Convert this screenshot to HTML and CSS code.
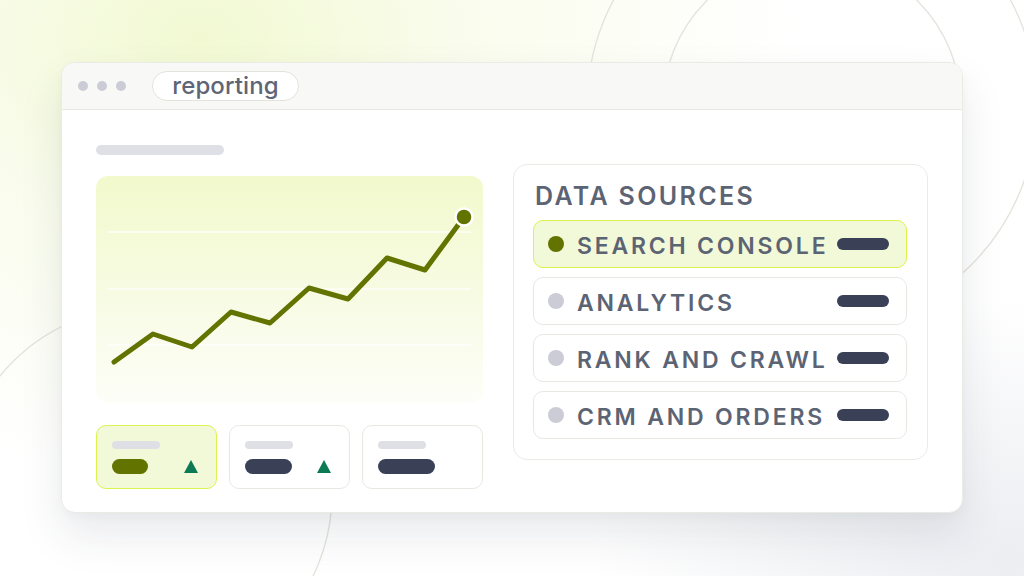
FILE: index.html
```html
<!DOCTYPE html>
<html lang="en">
<head>
<meta charset="utf-8">
<title>reporting</title>
<link rel="stylesheet" href="styles.css">
</head>
<body>
<div class="stage">
  <svg class="bg-lines" width="1024" height="576" viewBox="0 0 1024 576" aria-hidden="true">
    <circle cx="812" cy="106" r="225" />
    <circle cx="812" cy="106" r="149" />
    <circle cx="145" cy="494" r="187" />
  </svg>
  <div class="window">
    <div class="titlebar">
      <div class="dots"><span class="dot"></span><span class="dot"></span><span class="dot"></span></div>
      <div class="tab">reporting</div>
    </div>
    <div class="content">
      <div class="left">
        <div class="heading-bar"></div>
        <div class="chart">
          <svg width="386" height="227" viewBox="0 0 386 227">
            <line class="grid" x1="11" y1="56" x2="374" y2="56" />
            <line class="grid" x1="11" y1="113" x2="374" y2="113" />
            <line class="grid" x1="11" y1="169" x2="374" y2="169" />
            <polyline class="trend" points="17,186 56,158 95,171 134,136 173,147 212,112 251,123 290,82 328,94 367,41" />
            <circle class="end" cx="367" cy="41" r="8.5" />
          </svg>
        </div>
        <div class="cards">
          <div class="card active">
            <div class="card-label"></div>
            <div class="card-row"><span class="card-value v1"></span><span class="up"></span></div>
          </div>
          <div class="card">
            <div class="card-label"></div>
            <div class="card-row"><span class="card-value v2"></span><span class="up"></span></div>
          </div>
          <div class="card">
            <div class="card-label"></div>
            <div class="card-row"><span class="card-value v3"></span></div>
          </div>
        </div>
      </div>
      <div class="panel">
        <div class="panel-title">DATA SOURCES</div>
        <div class="rows">
          <div class="row active"><span class="status"></span><span class="row-name">SEARCH CONSOLE</span><span class="row-pill"></span></div>
          <div class="row"><span class="status"></span><span class="row-name">ANALYTICS</span><span class="row-pill"></span></div>
          <div class="row"><span class="status"></span><span class="row-name">RANK AND CRAWL</span><span class="row-pill"></span></div>
          <div class="row"><span class="status"></span><span class="row-name">CRM AND ORDERS</span><span class="row-pill"></span></div>
        </div>
      </div>
    </div>
  </div>
</div>
</body>
</html>
```

FILE: styles.css
```css
* { box-sizing: border-box; }
html, body { margin: 0; padding: 0; }
body {
  width: 1024px;
  height: 576px;
  overflow: hidden;
  font-family: Inter, "Noto Sans", "Liberation Sans", sans-serif;
  background:
    radial-gradient(ellipse 600px 440px at 200px 40px, rgba(240, 248, 205, 0.9), rgba(240, 248, 205, 0.35) 45%, rgba(240, 248, 205, 0) 100%),
    radial-gradient(ellipse 420px 260px at 1010px 560px, rgba(228, 230, 236, 0.7), rgba(228, 230, 236, 0) 100%),
    #ffffff;
}
.stage {
  position: relative;
  width: 1024px;
  height: 576px;
  padding: 62px 61px 0 61px;
}
.bg-lines {
  position: absolute;
  left: 0;
  top: 0;
}
.bg-lines circle {
  fill: none;
  stroke: #e4e4de;
  stroke-width: 1.4;
}
.window {
  position: relative;
  width: 902px;
  height: 451px;
  background: #ffffff;
  border: 1px solid #ebebe5;
  border-radius: 14px;
  box-shadow: 0 22px 44px rgba(40, 48, 70, 0.10), 0 4px 10px rgba(40, 48, 70, 0.03);
  overflow: hidden;
  display: flex;
  flex-direction: column;
}
.titlebar {
  height: 47px;
  flex: none;
  background: #f8f8f6;
  border-bottom: 1px solid #e8e8e2;
  display: flex;
  align-items: center;
  padding-left: 16px;
  gap: 26px;
}
.dots { display: flex; gap: 9px; }
.dot {
  width: 10px;
  height: 10px;
  border-radius: 50%;
  background: #cbccd6;
}
.tab {
  height: 30px;
  width: 147px;
  border: 1px solid #e3e3db;
  border-radius: 15px;
  background: #ffffff;
  color: #5e6577;
  font-size: 24px;
  font-weight: 500;
  line-height: 27px;
  text-align: center;
  letter-spacing: 0.1px;
}
.content {
  display: flex;
  gap: 30px;
  padding: 35px 34px 0 34px;
}
.left {
  width: 387px;
  display: flex;
  flex-direction: column;
}
.heading-bar {
  width: 128px;
  height: 10px;
  border-radius: 5px;
  background: #dfe0e6;
}
.chart {
  margin-top: 21px;
  height: 227px;
  border-radius: 12px;
  background: linear-gradient(180deg, #f2f9cc 0%, #f7fbe2 50%, #fdfef8 100%);
  padding-left: 1px;
}
.chart svg { display: block; }
.grid {
  stroke: rgba(255, 255, 255, 0.85);
  stroke-width: 1.5;
}
.trend {
  fill: none;
  stroke: #627300;
  stroke-width: 5;
  stroke-linecap: round;
  stroke-linejoin: round;
}
.end {
  fill: #627300;
  stroke: #ffffff;
  stroke-width: 2.5;
}
.cards {
  margin-top: 22px;
  display: grid;
  grid-template-columns: repeat(3, 1fr);
  gap: 12px;
}
.card {
  height: 64px;
  border: 1px solid #e8e8e2;
  border-radius: 10px;
  background: #ffffff;
  padding: 15px 18px 0 15px;
}
.card.active {
  background: #f2f9d8;
  border-color: #dbf24f;
}
.card-label {
  width: 48px;
  height: 8px;
  border-radius: 4px;
  background: #dfe0e6;
}
.card-row {
  margin-top: 10px;
  display: flex;
  justify-content: space-between;
  align-items: center;
}
.card-value {
  height: 15px;
  border-radius: 8px;
  background: #3a4157;
}
.card-value.v1 { width: 36px; background: #627300; }
.card-value.v2 { width: 47px; }
.card-value.v3 { width: 57px; }
.up {
  width: 0;
  height: 0;
  border-left: 7.5px solid transparent;
  border-right: 7.5px solid transparent;
  border-bottom: 13px solid #0c7a55;
}
.panel {
  margin-top: 19px;
  width: 415px;
  height: 296px;
  border: 1px solid #ebebe5;
  border-radius: 14px;
  padding: 16px 20px 0 19px;
}
.panel-title {
  color: #5c6474;
  font-size: 25px;
  font-weight: 600;
  letter-spacing: 2.35px;
  line-height: 30px;
  padding-left: 2px;
}
.rows {
  margin-top: 9px;
  display: flex;
  flex-direction: column;
  gap: 9px;
}
.row {
  height: 48px;
  border: 1px solid #e8e8e2;
  border-radius: 10px;
  display: flex;
  align-items: center;
  padding: 0 17px 0 14px;
}
.row.active {
  background: #f2f9d8;
  border-color: #dbf24f;
}
.status {
  width: 16px;
  height: 16px;
  border-radius: 50%;
  background: #cbccd6;
  flex: none;
}
.row.active .status { background: #627300; }
.row-name {
  margin-left: 13px;
  padding-top: 4px;
  color: #5c6474;
  font-size: 23px;
  font-weight: 600;
  letter-spacing: 2.8px;
  line-height: 1;
  flex: 1;
  white-space: nowrap;
}
.row-pill {
  width: 52px;
  height: 12px;
  border-radius: 6px;
  background: #3a4157;
  flex: none;
}
```
